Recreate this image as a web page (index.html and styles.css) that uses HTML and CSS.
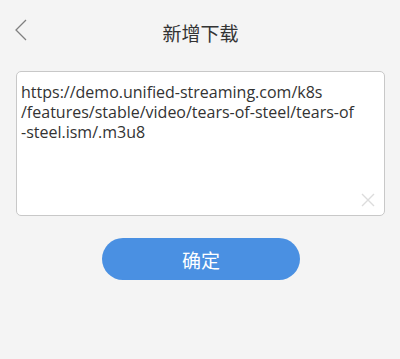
FILE: index.html
```html
<!DOCTYPE html>
<html lang="zh">
<head>
  <meta charset="UTF-8" />
  <meta name="viewport" content="width=device-width, initial-scale=1.0" />
  <title>新增下载</title>
  <link rel="stylesheet" href="styles.css">
</head>
<body>
  <div class="header">
    <span class="back">
      <svg width="14" height="22" viewBox="0 0 14 22">
        <polyline points="12,1 2,11 12,21" fill="none" stroke="#808080" stroke-width="1.3" />
      </svg>
    </span>
    <h1>新增下载</h1>
  </div>

  <div class="url-box">
    <div class="url-text">https://demo.unified-streaming.com/k8s<br>/features/stable/video/tears-of-steel/tears-of<br>-steel.ism/.m3u8</div>
    <span class="clear">
      <svg width="14" height="14" viewBox="0 0 14 14">
        <path d="M1 1 L13 13 M13 1 L1 13" stroke="#dcdcdc" stroke-width="1.4" />
      </svg>
    </span>
  </div>

  <div class="actions">
    <button class="confirm">确定</button>
  </div>
</body>
</html>
```

FILE: styles.css
```css
body {
  margin: 0;
  padding: 0 15px 0 16px;
  background-color: #f4f4f4;
  font-family: "Open Sans", "Noto Sans CJK SC", sans-serif;
  width: 400px;
  height: 359px;
  box-sizing: border-box;
}
.header {
  position: relative;
  height: 64px;
  display: flex;
  align-items: center;
  justify-content: center;
}
.header h1 {
  margin: 0;
  font-family: "Noto Sans CJK SC", sans-serif;
  font-size: 19px;
  font-weight: normal;
  color: #333;
}
.back {
  position: absolute;
  left: -2px;
  top: 19px;
  display: flex;
}
.url-box {
  position: relative;
  margin-top: 7px;
  height: 145px;
  box-sizing: border-box;
  background-color: #fff;
  border: 1px solid #c8c8c8;
  border-radius: 5px;
  padding: 10px 4px;
}
.url-text {
  font-size: 16px;
  line-height: 20px;
  color: #333;
}
.clear {
  position: absolute;
  right: 9px;
  bottom: 8px;
  display: flex;
}
.actions {
  display: flex;
  justify-content: center;
  margin-top: 22px;
}
.confirm {
  width: 198px;
  height: 42px;
  border: none;
  border-radius: 21px;
  background-color: #4a90e2;
  color: #fff;
  font-family: "Noto Sans CJK SC", sans-serif;
  font-size: 19px;
  margin-left: 1px;
}
```
